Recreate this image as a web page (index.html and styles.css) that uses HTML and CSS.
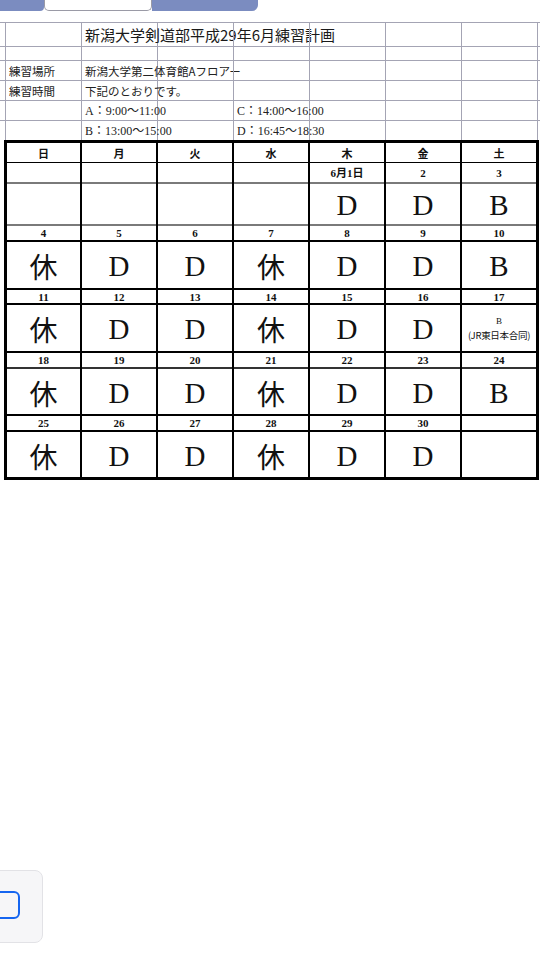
FILE: index.html
```html
<!DOCTYPE html>
<html lang="ja">
<head>
<meta charset="utf-8">
<title>練習計画</title>
<link rel="stylesheet" href="styles.css">
</head>
<body>
<div class="tabs">
  <div class="tab tab-left"></div>
  <div class="tab tab-active"></div>
  <div class="tab tab-right"></div>
</div>

<div class="sheet">
  <!-- row 1 -->
  <div class="c r1"></div><div class="c r1"></div><div class="c r1 title"><span>新潟大学剣道部平成29年6月練習計画</span></div><div class="c r1"></div><div class="c r1"></div><div class="c r1"></div><div class="c r1"></div><div class="c r1"></div><div class="c r1"></div>
  <!-- row 2 -->
  <div class="c"></div><div class="c"></div><div class="c"></div><div class="c"></div><div class="c"></div><div class="c"></div><div class="c"></div><div class="c"></div><div class="c"></div>
  <!-- row 3 -->
  <div class="c"></div><div class="c goth">練習場所</div><div class="c goth">新潟大学第二体育館Aフロアー</div><div class="c"></div><div class="c"></div><div class="c"></div><div class="c"></div><div class="c"></div><div class="c"></div>
  <!-- row 4 -->
  <div class="c"></div><div class="c goth">練習時間</div><div class="c goth">下記のとおりです。</div><div class="c"></div><div class="c"></div><div class="c"></div><div class="c"></div><div class="c"></div><div class="c"></div>
  <!-- row 5 -->
  <div class="c"></div><div class="c"></div><div class="c mincho">A：9:00〜11:00</div><div class="c"></div><div class="c mincho">C：14:00〜16:00</div><div class="c"></div><div class="c"></div><div class="c"></div><div class="c"></div>
  <!-- row 6 -->
  <div class="c last"></div><div class="c last"></div><div class="c last mincho">B：13:00〜15:00</div><div class="c last"></div><div class="c last mincho">D：16:45〜18:30</div><div class="c last"></div><div class="c last"></div><div class="c last"></div><div class="c last"></div>
</div>

<div class="cal">
  <div class="k hd">日</div><div class="k hd">月</div><div class="k hd">火</div><div class="k hd">水</div><div class="k hd">木</div><div class="k hd">金</div><div class="k hd">土</div>

  <div class="k dt gray"></div><div class="k dt gray"></div><div class="k dt gray"></div><div class="k dt gray"></div><div class="k dt gray">6月1日</div><div class="k dt gray">2</div><div class="k dt gray">3</div>
  <div class="k ct gray"></div><div class="k ct gray"></div><div class="k ct gray"></div><div class="k ct gray"></div><div class="k ct gray">D</div><div class="k ct gray">D</div><div class="k ct gray">B</div>

  <div class="k dt">4</div><div class="k dt">5</div><div class="k dt">6</div><div class="k dt">7</div><div class="k dt">8</div><div class="k dt">9</div><div class="k dt">10</div>
  <div class="k ct"><span class="kyu">休</span></div><div class="k ct">D</div><div class="k ct">D</div><div class="k ct"><span class="kyu">休</span></div><div class="k ct">D</div><div class="k ct">D</div><div class="k ct">B</div>

  <div class="k dt">11</div><div class="k dt">12</div><div class="k dt">13</div><div class="k dt">14</div><div class="k dt">15</div><div class="k dt">16</div><div class="k dt">17</div>
  <div class="k ct"><span class="kyu">休</span></div><div class="k ct">D</div><div class="k ct">D</div><div class="k ct"><span class="kyu">休</span></div><div class="k ct">D</div><div class="k ct">D</div><div class="k ct note"><span class="note-b">B</span><span class="note-t">(JR東日本合同)</span></div>

  <div class="k dt dark">18</div><div class="k dt dark">19</div><div class="k dt dark">20</div><div class="k dt dark">21</div><div class="k dt dark">22</div><div class="k dt dark">23</div><div class="k dt dark">24</div>
  <div class="k ct"><span class="kyu">休</span></div><div class="k ct">D</div><div class="k ct">D</div><div class="k ct"><span class="kyu">休</span></div><div class="k ct">D</div><div class="k ct">D</div><div class="k ct">B</div>

  <div class="k dt">25</div><div class="k dt">26</div><div class="k dt">27</div><div class="k dt">28</div><div class="k dt">29</div><div class="k dt">30</div><div class="k dt"></div>
  <div class="k ct end"><span class="kyu">休</span></div><div class="k ct end">D</div><div class="k ct end">D</div><div class="k ct end"><span class="kyu">休</span></div><div class="k ct end">D</div><div class="k ct end">D</div><div class="k ct end"></div>
</div>

<div class="widget"><div class="widget-btn"></div></div>
</body>
</html>
```

FILE: styles.css
```css
html, body {
  margin: 0;
  padding: 0;
  background: #fff;
}
body {
  width: 540px;
  height: 960px;
  overflow: hidden;
  font-family: "Noto Sans CJK JP", "Noto Sans", sans-serif;
  color: #111;
}

/* top tabs */
.tabs {
  display: flex;
  height: 11px;
}
.tab {
  height: 11px;
  box-sizing: border-box;
}
.tab-left {
  width: 44px;
  background: #7b8cc0;
  border-radius: 0 0 4px 0;
}
.tab-active {
  width: 108px;
  background: #fff;
  border: 1px solid #9a9aa6;
  border-top: none;
  border-radius: 0 0 5px 5px;
}
.tab-right {
  width: 106px;
  background: #7b8cc0;
  border-radius: 0 0 6px 0;
}

/* upper sheet grid */
.sheet {
  margin-top: 11px;
  display: grid;
  grid-template-columns: 6px repeat(7, 76px) 1fr;
  grid-template-rows: 24px 14px 20px 20px 20px 19px;
  border-top: 1px solid #a4a4b4;
}
.c {
  box-sizing: border-box;
  border-right: 1px solid #a4a4b4;
  border-bottom: 1px solid #a4a4b4;
  display: flex;
  align-items: center;
  padding-left: 3px;
  white-space: nowrap;
  font-size: 12px;
  line-height: 14px;
  min-width: 0;
  overflow: visible;
}
.c.last {
  border-bottom: none;
}
.c:first-child {
  padding-left: 0;
}
.title {
  font-size: 15px;
  line-height: 18px;
  align-items: flex-end;
  padding-bottom: 2px;
  color: #1a1a1a;
}
.goth {
  font-family: "Noto Sans CJK JP", sans-serif;
  font-size: 11.5px;
  color: #222;
}
.mincho {
  font-family: "Liberation Serif", "Noto Sans CJK JP", serif;
  font-size: 12px;
  color: #222;
}

/* calendar */
.cal {
  margin-left: 4px;
  width: 535px;
  box-sizing: border-box;
  border: 3px solid #000;
  background: #000;
  display: grid;
  grid-template-columns: 73px repeat(6, 74px);
  grid-template-rows: 20px 21px 42px 16px 48px 15px 48px 16px 47px 16px 45px;
  column-gap: 2px;
}
.k {
  background: #fff;
  box-sizing: border-box;
  border-bottom: 2px solid #000;
  display: flex;
  align-items: center;
  justify-content: center;
  text-align: center;
}
.k.hd {
  border-bottom: 1px solid #000;
  font-family: "Noto Sans CJK JP", sans-serif;
  font-weight: 700;
  font-size: 11px;
  line-height: 12px;
}
.k.dt {
  font-family: "Liberation Serif", "Noto Sans CJK JP", serif;
  font-weight: 700;
  font-size: 11px;
  line-height: 12px;
}
.k.gray {
  border-bottom-color: #7a7a7a;
}
.k.dark {
  border-bottom-color: #333;
}
.k.ct {
  font-family: "Liberation Serif", serif;
  font-size: 29px;
  line-height: 30px;
  padding-top: 2px;
}
.k.end {
  border-bottom: none;
}
.kyu {
  font-family: "Noto Sans CJK JP", sans-serif;
  font-size: 28px;
  line-height: 30px;
  font-weight: 400;
}
.k.note {
  flex-direction: column;
  padding-top: 0;
}
.note-b {
  font-family: "Liberation Serif", serif;
  font-size: 9px;
  line-height: 14px;
}
.note-t {
  font-family: "Noto Sans CJK JP", sans-serif;
  font-size: 9.5px;
  line-height: 14px;
  letter-spacing: -0.3px;
}

/* floating widget */
.widget {
  position: fixed;
  left: -12px;
  top: 870px;
  width: 55px;
  height: 73px;
  box-sizing: border-box;
  background: #f6f6f8;
  border: 1px solid #e2e2e6;
  border-radius: 8px;
}
.widget-btn {
  position: absolute;
  left: -2px;
  top: 20px;
  width: 33px;
  height: 28px;
  box-sizing: border-box;
  border: 2px solid #1565f0;
  border-radius: 6px;
  background: #f6f6f8;
}
```
